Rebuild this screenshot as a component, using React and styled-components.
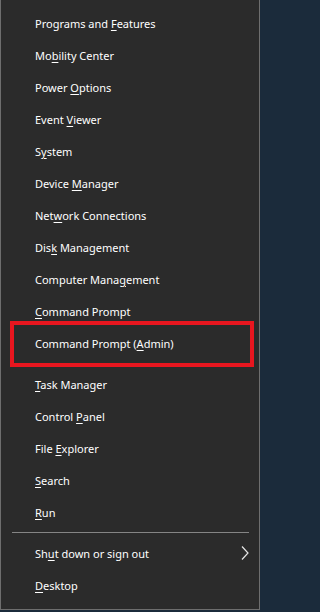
import React from 'react';
import styled, { createGlobalStyle } from 'styled-components';

const GlobalStyle = createGlobalStyle`
	html, body {
		margin: 0;
		padding: 0;
		background: #1b2b3b;
	}
`;

const Menu = styled.div`
	position: relative;
	width: 258px;
	padding: 7px 0 8px 0;
	background-color: #2b2b2b;
	border: 1px solid #6e6e6e;
	border-top: none;
	font-family: 'Noto Sans', 'Open Sans', sans-serif;
	font-size: 11px;
	color: #ffffff;
	-webkit-font-smoothing: antialiased;
`;

const Item = styled.div`
	display: flex;
	align-items: center;
	justify-content: space-between;
	height: 32px;
	padding: 0 10px 0 34px;
	white-space: nowrap;
	cursor: default;
`;

const Key = styled.span`
	text-decoration: underline;
	text-decoration-thickness: 1px;
	text-underline-offset: 2px;
`;

const Separator = styled.div`
	height: 1px;
	margin: 4px 10px 4px 11px;
	background-color: #858585;
`;

const Highlight = styled.div`
	position: absolute;
	left: 9px;
	top: 321px;
	width: 236px;
	height: 38px;
	border: 4px solid #e8161f;
	pointer-events: none;
`;

const Chevron = () => (
	<svg width="8" height="14" viewBox="0 0 8 14" fill="none">
		<polyline points="1,0.5 7,7 1,13.5" stroke="#e6e6e6" strokeWidth="1.2" />
	</svg>
);

// "&" marks the access key, like the Windows resource strings
const groups = [
	[
		'Programs and &Features',
		'Mo&bility Center',
		'Power &Options',
		'Event &Viewer',
		'S&ystem',
		'Device &Manager',
		'Net&work Connections',
		'Dis&k Management',
		'Computer Mana&gement',
		'&Command Prompt',
		'Command Prompt (&Admin)',
	],
	['&Task Manager', 'Control &Panel', 'File &Explorer', '&Search', '&Run'],
	['Sh&ut down or sign out', '&Desktop'],
];

const Label = ({ text }) => {
	const i = text.indexOf('&');
	if (i < 0) return <span>{text}</span>;
	return (
		<span>
			{text.slice(0, i)}
			<Key>{text[i + 1]}</Key>
			{text.slice(i + 2)}
		</span>
	);
};

export default () => (
	<>
		<GlobalStyle />
		<Menu>
			{groups.map((group, g) => (
				<React.Fragment key={g}>
					{g > 0 && <Separator />}
					{group.map((text) => (
						<Item key={text}>
							<Label text={text} />
							{text.startsWith('Sh&ut') && <Chevron />}
						</Item>
					))}
				</React.Fragment>
			))}
			<Highlight />
		</Menu>
	</>
);
